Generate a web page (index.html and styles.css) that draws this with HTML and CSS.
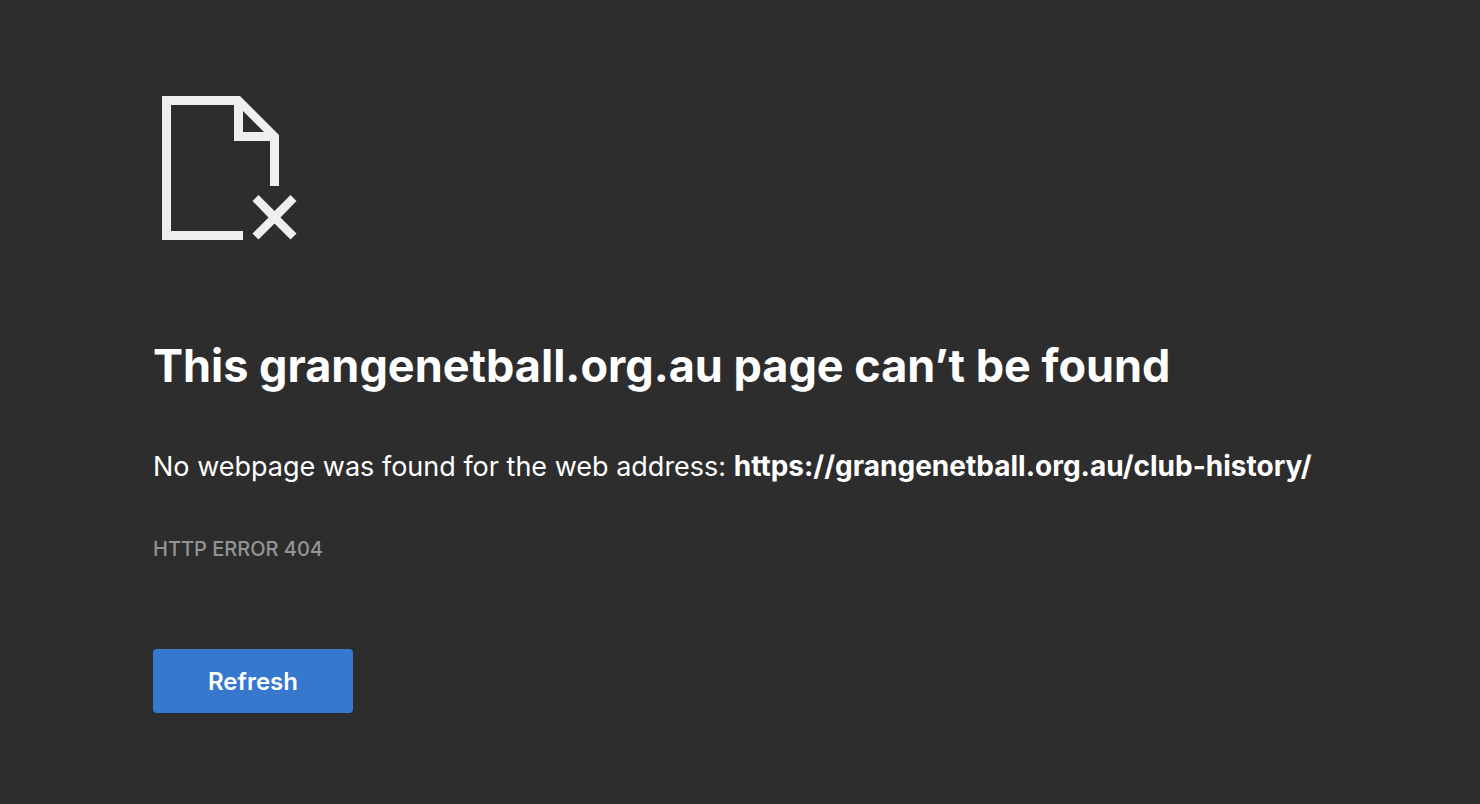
FILE: index.html
```html
<!DOCTYPE html>
<html lang="en">
<head>
    <meta charset="UTF-8">
    <meta name="viewport" content="width=device-width, initial-scale=1">
    <title>grangenetball.org.au</title>
    <link rel="stylesheet" href="styles.css">
</head>
<body>
    <main class="error-page">
        <svg class="icon" viewBox="0 0 144 144" aria-hidden="true">
            <path d="M0 0H78L117 39V90H108V45H72V9H9V135H81V144H0ZM81 15V36H102Z"/>
            <path d="M96.500 99L112.500 115L128.500 99L134.500 105L118.500 121.500L134.500 137.500L128.500 143.500L112.500 127.500L96.500 143.500L90.500 137.500L106.500 121.500L90.500 105Z"/>
        </svg>
        <h1 class="title">This grangenetball.org.au page can’t be found</h1>
        <p class="summary">No webpage was found for the web address: <strong class="address">https://grangenetball.org.au/club-history/</strong></p>
        <p class="error-code">HTTP ERROR 404</p>
        <button class="refresh" type="button">Refresh</button>
    </main>
</body>
</html>
```
FILE: styles.css
```css
body
{
    margin: 0;
    background: #2d2d2d;
    color: #fff;
    font-family: Inter, "Liberation Sans", sans-serif;
}
.error-page
{
    padding: 96px 144px 0 153px;
}
.icon
{
    display: block;
    width: 144px;
    height: 144px;
    margin-left: 9px;
    fill: #efefef;
}
.title
{
    margin: 96px 0 0;
    font-size: 45px;
    line-height: 60px;
    font-weight: 700;
}
.summary
{
    margin: 48px 0 0;
    font-size: 27px;
    line-height: 44px;
}
.address
{
    font-size: 28px;
}
.error-code
{
    margin: 42px 0 0;
    color: #949494;
    font-size: 20px;
    line-height: 36px;
    font-weight: 500;
}
.refresh
{
    display: block;
    margin-top: 82px;
    width: 200px;
    height: 64px;
    border: 0;
    border-radius: 4px;
    background: #3578ce;
    color: #fff;
    font-family: inherit;
    font-size: 24px;
    font-weight: 600;
    cursor: pointer;
}
```
